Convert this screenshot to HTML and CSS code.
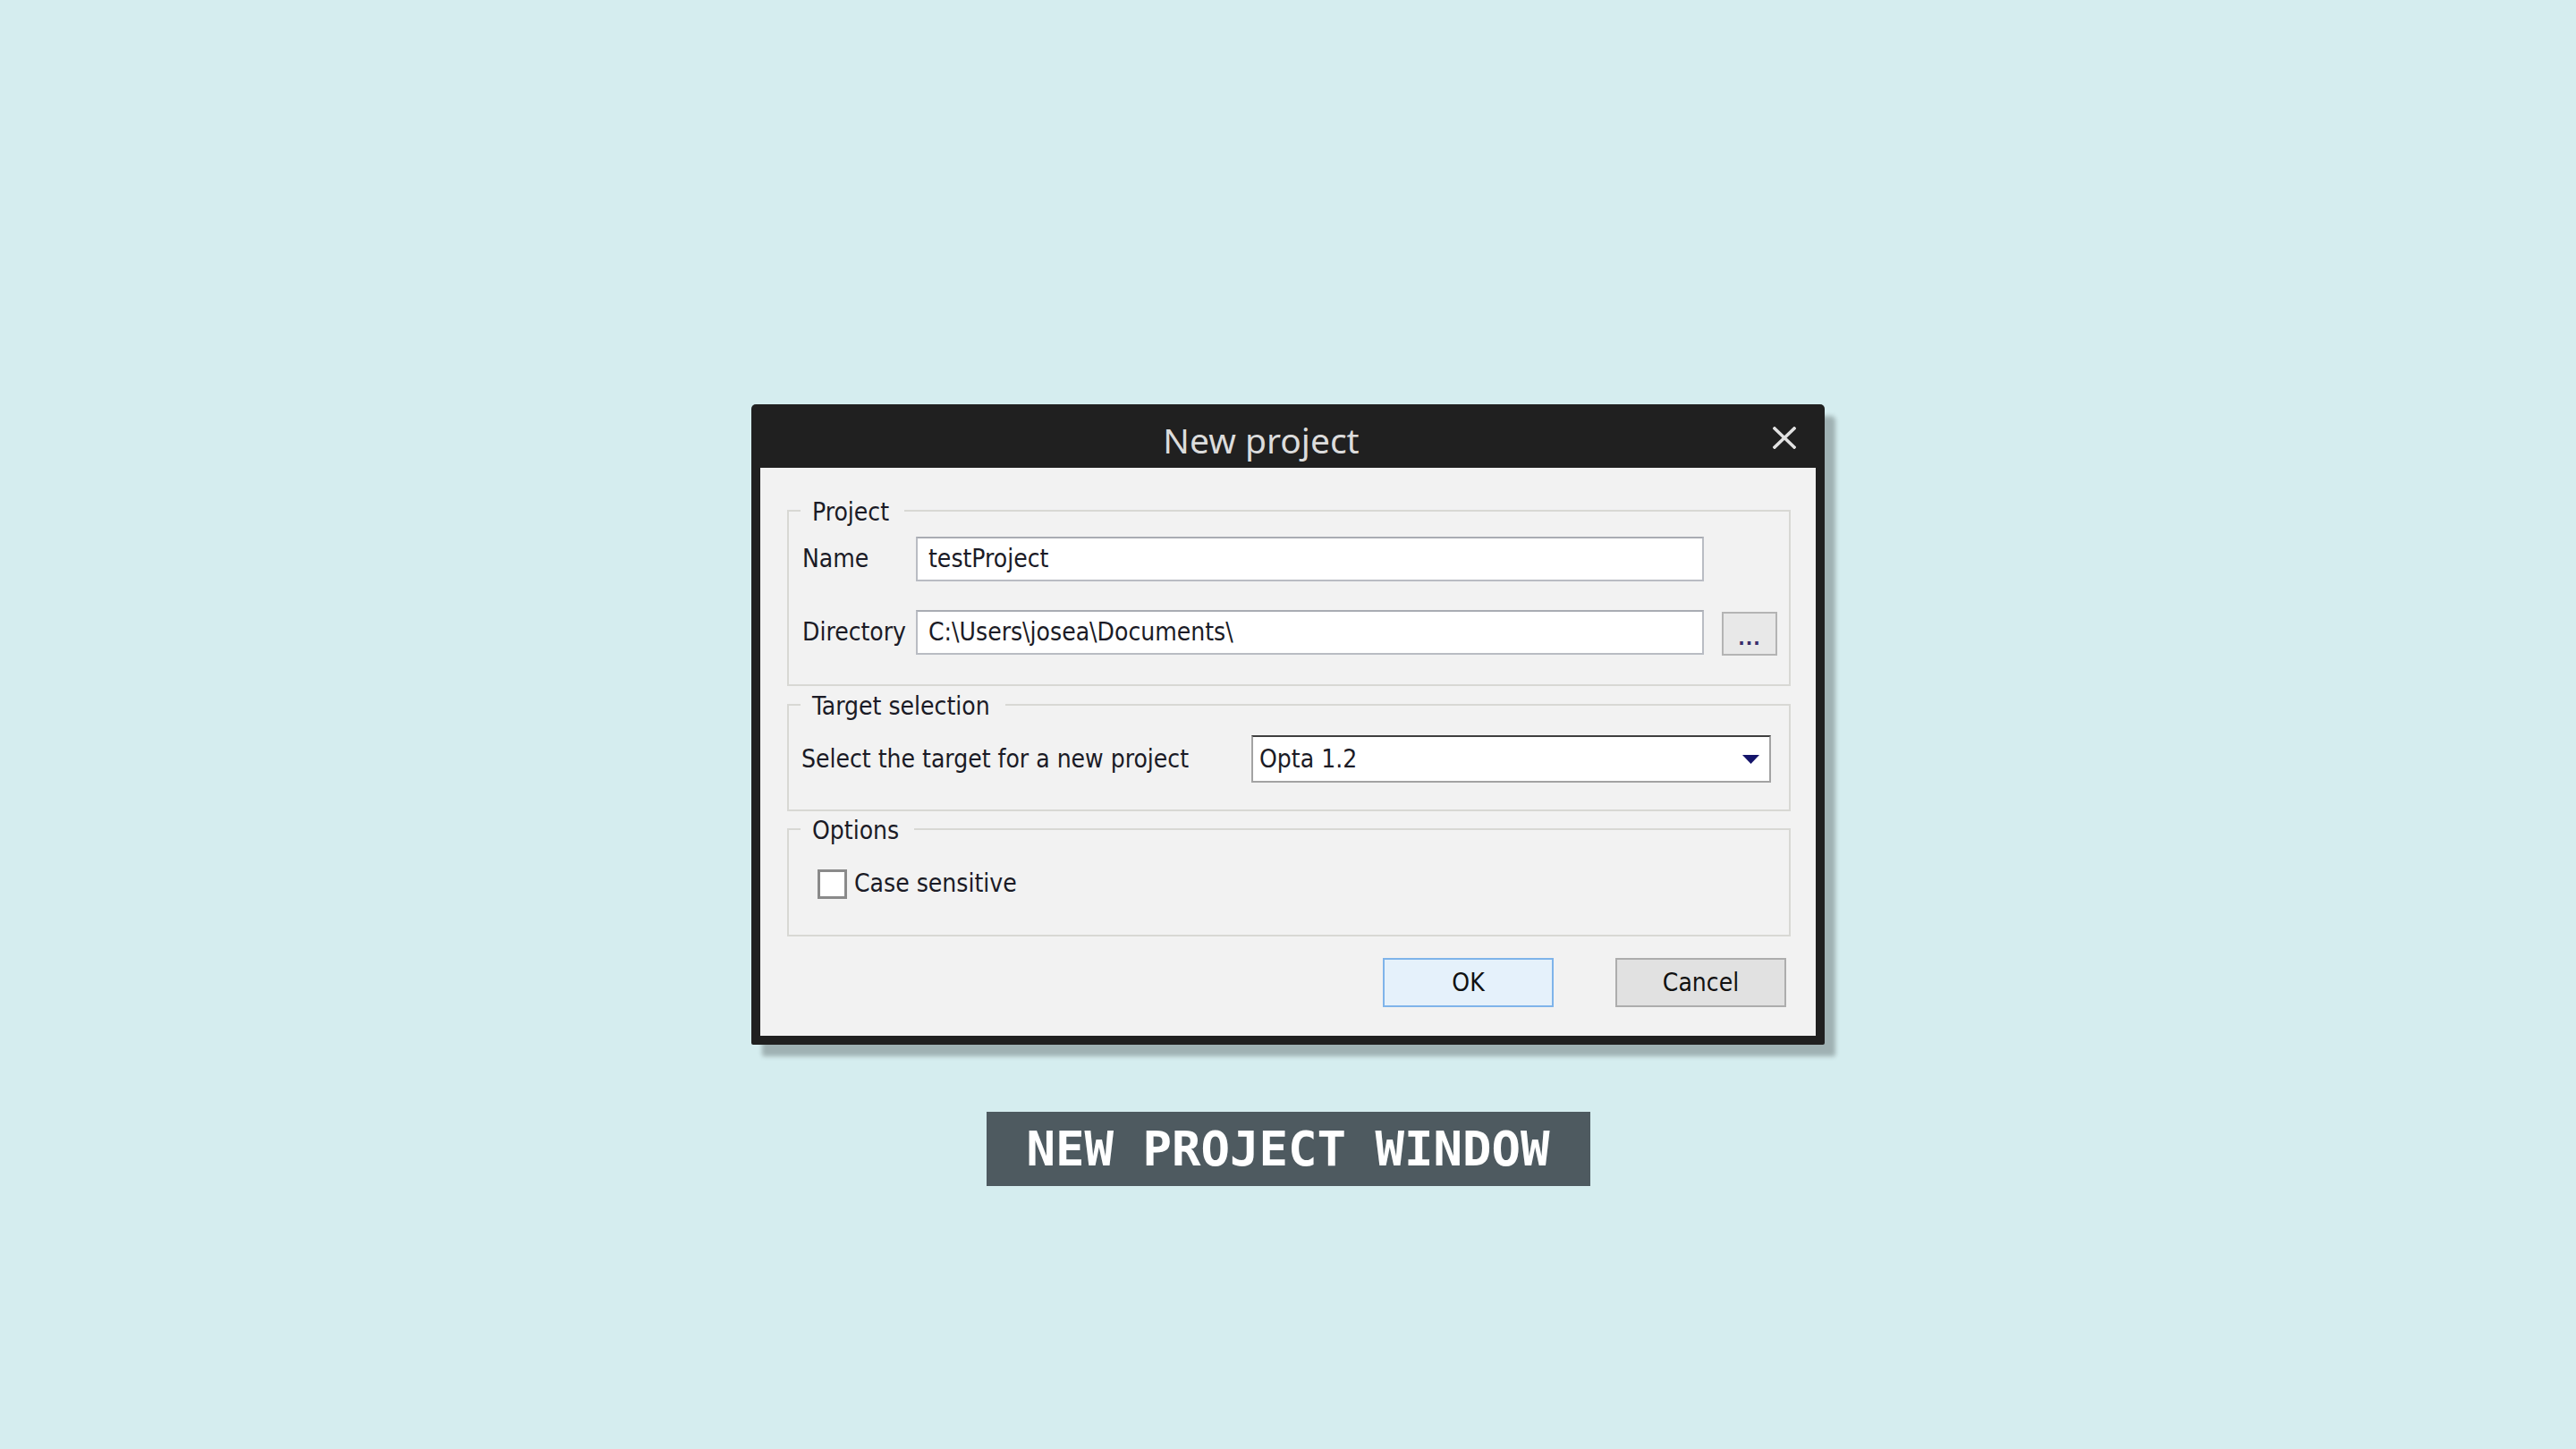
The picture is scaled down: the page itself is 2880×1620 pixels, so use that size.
FILE: index.html
```html
<!DOCTYPE html>
<html lang="en">
<head>
<meta charset="utf-8">
<title>New project</title>
<link rel="stylesheet" href="styles.css">
</head>
<body>
<main class="stage">
  <section class="dialog">
    <header class="titlebar">
      <h1 class="title">New project</h1>
      <div class="close" aria-label="Close">
        <svg width="26" height="25" viewBox="0 0 26 25"><path d="M2 2 L24 23 M24 2 L2 23" stroke="#e2e2e2" stroke-width="3.6" stroke-linecap="square" fill="none"/></svg>
      </div>
    </header>
    <div class="client">
      <fieldset class="group">
        <legend>Project</legend>
        <div class="project-rows">
          <span class="lbl">Name</span>
          <div class="input">testProject</div>
          <span></span>
          <span class="lbl">Directory</span>
          <div class="input">C:\Users\josea\Documents\</div>
          <div class="browse">...</div>
        </div>
      </fieldset>
      <fieldset class="group group-target">
        <legend>Target selection</legend>
        <div class="target-row">
          <span class="lbl">Select the target for a new project</span>
          <div class="select">
            <span>Opta 1.2</span>
            <svg width="19" height="10" viewBox="0 0 19 10"><path d="M0 0 H19 L9.5 10 Z" fill="#14146a"/></svg>
          </div>
        </div>
      </fieldset>
      <fieldset class="group group-options">
        <legend>Options</legend>
        <div class="options-row">
          <span class="checkbox"></span>
          <span class="lbl">Case sensitive</span>
        </div>
      </fieldset>
      <div class="buttons">
        <div class="btn btn-default">OK</div>
        <div class="btn">Cancel</div>
      </div>
    </div>
  </section>
  <div class="caption">NEW PROJECT WINDOW</div>
</main>
</body>
</html>
```
FILE: styles.css
```css
html, body {
  margin: 0;
  padding: 0;
}
body {
  background: #d5edef;
  font-family: "DejaVu Sans Condensed", "DejaVu Sans", sans-serif;
  font-stretch: condensed;
  color: #1b1b26;
}
.stage {
  min-height: 1620px;
  box-sizing: border-box;
  padding-top: 452px;
  display: flex;
  flex-direction: column;
  align-items: center;
}
.dialog {
  width: 1200px;
  background: #202020;
  border-radius: 5px 5px 2px 2px;
  box-shadow: 12px 13px 5px rgba(0, 0, 0, 0.25);
}
.titlebar {
  height: 71px;
  display: flex;
}
.title {
  flex: 1;
  margin: 0;
  padding-top: 13px;
  text-align: center;
  font-family: "Noto Sans", "Open Sans", sans-serif;
  font-stretch: normal;
  font-weight: 400;
  font-size: 39px;
  line-height: 53px;
  color: #dcdcdc;
}
.close {
  width: 60px;
  box-sizing: border-box;
  padding: 25px 32px 0 2px;
}
.close svg {
  display: block;
}
.client {
  margin: 0 10px 10px;
  height: 635px;
  box-sizing: border-box;
  background: #f2f2f2;
  padding-top: 29px;
  display: flex;
  flex-direction: column;
  font-size: 28px;
  line-height: 34px;
}
.group {
  margin: 0 28px 0 30px;
  padding: 0;
  border: 2px solid #d8d8d4;
  min-width: 0;
}
.group legend {
  margin-left: 13px;
  padding: 4px 17px 0 13px;
  font-size: 28px;
  line-height: 34px;
}
.group-target {
  margin-top: 2px;
}
.group-options {
  margin-top: 1px;
}
.project-rows {
  padding: 10px 13px 32px 15px;
  display: grid;
  grid-template-columns: 107px 881px 62px;
  column-gap: 20px;
  row-gap: 31px;
  align-items: center;
}
.input {
  height: 50px;
  box-sizing: border-box;
  background: #fff;
  border: 2px solid #b9bcc3;
  border-top-color: #a9acb3;
  padding-left: 12px;
  display: flex;
  align-items: center;
  white-space: nowrap;
}
.browse {
  height: 49px;
  box-sizing: border-box;
  background: #e8e8e8;
  border: 2px solid #b4b4b4;
  display: flex;
  align-items: flex-end;
  justify-content: center;
  padding-bottom: 6px;
  font-weight: bold;
  font-size: 22px;
  line-height: 22px;
  letter-spacing: 1px;
  color: #3a2f6a;
  margin-top: 3px;
}
.target-row {
  padding: 15px 20px 30px 14px;
  display: flex;
  align-items: center;
}
.select {
  margin-left: auto;
  width: 581px;
  height: 53px;
  box-sizing: border-box;
  background: #fff;
  border: 2px solid #a3a3a3;
  border-top-color: #3f3f3f;
  padding: 0 11px 0 7px;
  display: flex;
  align-items: center;
  justify-content: space-between;
}
.select svg {
  display: block;
}
.options-row {
  padding: 25px 20px 40px 32px;
  display: flex;
  align-items: center;
  gap: 8px;
}
.checkbox {
  width: 33px;
  height: 33px;
  box-sizing: border-box;
  background: #fff;
  border: 3px solid #8a8a8a;
}
.buttons {
  margin-top: 24px;
  padding-right: 33px;
  display: flex;
  justify-content: flex-end;
  gap: 69px;
}
.btn {
  width: 191px;
  height: 55px;
  box-sizing: border-box;
  background: #e1e1e1;
  border: 2px solid #adadad;
  display: flex;
  align-items: center;
  justify-content: center;
  color: #111;
}
.btn-default {
  background: #e5f1fb;
  border-color: #7fb4ea;
}
.caption {
  margin-top: 75px;
  width: 675px;
  height: 83px;
  background: #4e5a60;
  color: #fff;
  display: flex;
  align-items: center;
  justify-content: center;
  font-family: "DejaVu Sans Mono", "Liberation Mono", monospace;
  font-stretch: normal;
  font-weight: bold;
  font-size: 54px;
  letter-spacing: 0;
}
```
